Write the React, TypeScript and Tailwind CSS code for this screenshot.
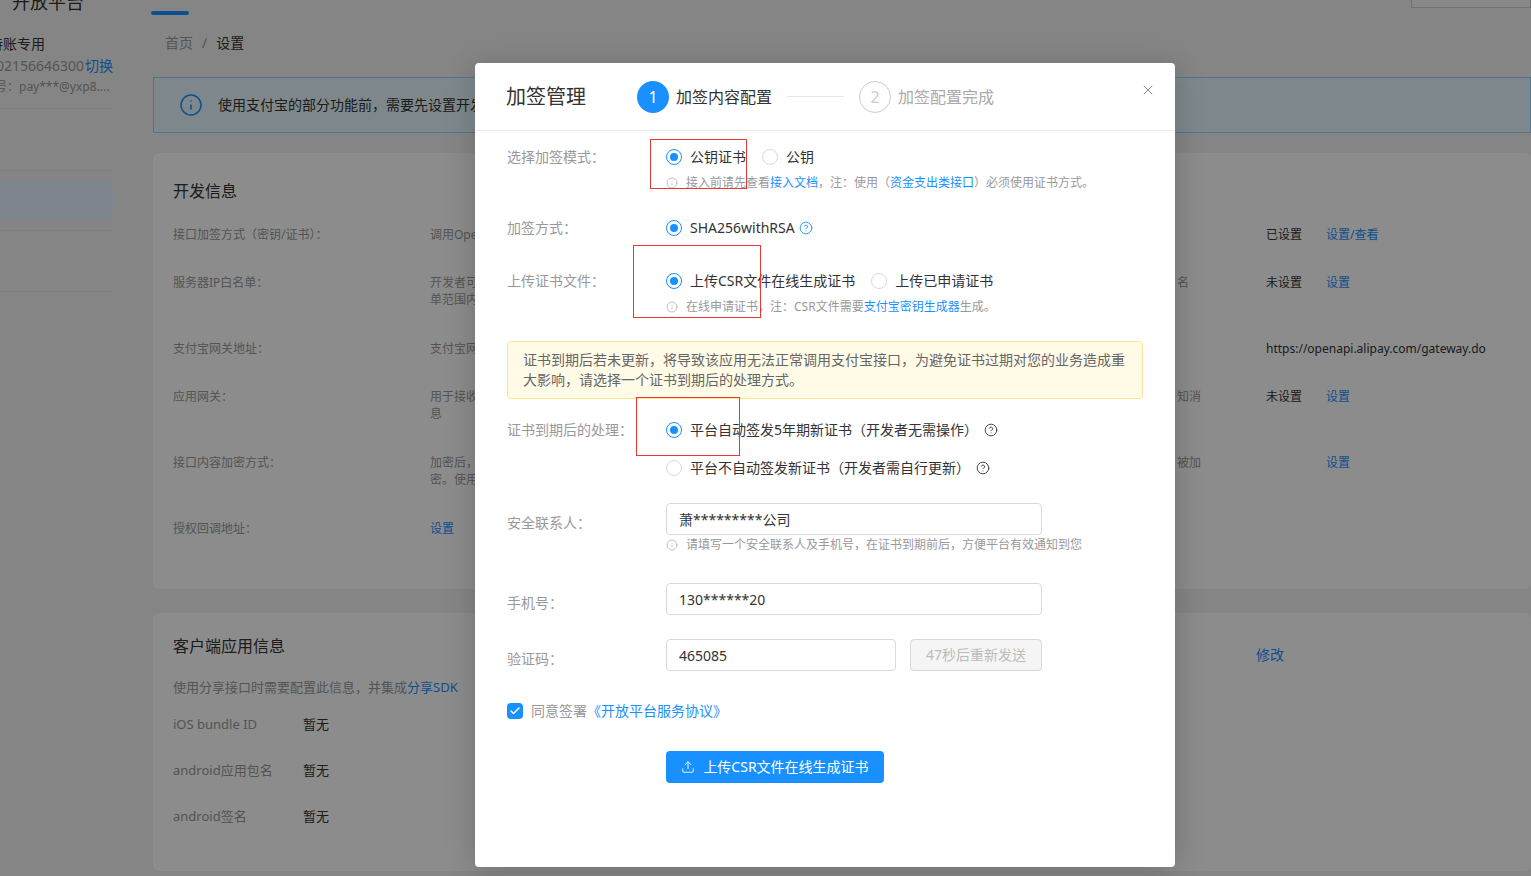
import { Check, CircleHelp, Info, Upload, X } from "lucide-react"
import type { ReactNode } from "react"

const devRows = [
  { label: "接口加签方式（密钥/证书）：", desc: ["调用OpenAPI时需要使用的加签方式"], tail: "", status: "已设置", link: "设置/查看", h: "h-[48px]" },
  { label: "服务器IP白名单：", desc: ["开发者可设置调用接口的服务器IP", "单范围内的请求才会被受理"], tail: "名", status: "未设置", link: "设置", h: "h-[66px]" },
  { label: "支付宝网关地址：", desc: ["支付宝网关地址用于接口调用"], tail: "", status: "https://openapi.alipay.com/gateway.do", link: "", h: "h-[48px]" },
  { label: "应用网关：", desc: ["用于接收支付宝异步通知消", "息"], tail: "知消", status: "未设置", link: "设置", h: "h-[66px]" },
  { label: "接口内容加密方式：", desc: ["加密后，接口内容将被加", "密。使用前请先配置"], tail: "被加", status: "", link: "设置", h: "h-[66px]" },
  { label: "授权回调地址：", desc: [], tail: "", status: "", link: "", h: "h-[48px]" },
]

const clientRows = [
  { label: "iOS bundle ID", value: "暂无" },
  { label: "android应用包名", value: "暂无" },
  { label: "android签名", value: "暂无" },
]

function Radio({ checked, children }: { checked?: boolean; children: ReactNode }) {
  return (
    <div className="flex items-center h-[22px] text-sm text-[#333] whitespace-nowrap">
      <span className={`w-4 h-4 rounded-full border flex items-center justify-center bg-white ${checked ? "border-[#1890ff]" : "border-[#d9d9d9]"}`}>
        {checked && <span className="w-2 h-2 rounded-full bg-[#1890ff]" />}
      </span>
      <span className="ml-2">{children}</span>
    </div>
  )
}

function Hint({ children, className = "" }: { children: ReactNode; className?: string }) {
  return (
    <div className={`flex items-center h-[18px] pl-[159px] text-xs text-[#999] whitespace-nowrap ${className}`}>
      <Info size={12} strokeWidth={1.5} className="mr-2 text-[#aaa]" />
      <span>{children}</span>
    </div>
  )
}

function FormRow({ label, children, className = "", labelClass = "" }: { label: string; children: ReactNode; className?: string; labelClass?: string }) {
  return (
    <div className={`flex items-center ${className}`}>
      <div className={`w-[159px] shrink-0 text-sm text-[#999] ${labelClass}`}>{label}</div>
      {children}
    </div>
  )
}

function Field({ value, className = "w-[376px]" }: { value: string; className?: string }) {
  return (
    <input
      readOnly
      value={value}
      className={`h-8 px-3 border border-[#d9d9d9] rounded-sm text-sm text-[#333] outline-none ${className}`}
    />
  )
}

function A({ children }: { children: ReactNode }) {
  return <span className="text-[#1890ff]">{children}</span>
}

function Background() {
  return (
    <div className="h-screen overflow-hidden bg-[#f3f3f3] text-[#333]">
      <div className="h-[15px] flex items-start overflow-hidden">
        <div className="w-[151px] pl-3 -mt-[7px] text-lg leading-none text-[#333]">开放平台</div>
        <div className="w-[38px] h-[4px] mt-[11px] rounded-sm bg-[#1890ff]" />
        <div className="ml-auto w-[120px] h-[9px] -mt-px border border-[#ccc] bg-[#f8f8f8]" />
      </div>

      <div className="flex">
        <div className="w-[113px] shrink-0 overflow-hidden">
          <div className="h-[94px] pt-[19px] border-b border-[#e8e8e8] whitespace-nowrap">
            <div className="-ml-[11px] text-sm leading-5 text-[#333]">待账专用</div>
            <div className="flex justify-between mt-[2px] text-sm leading-5 text-[#999]">
              <span className="-ml-[4px]">02156646300</span>
              <A>切换</A>
            </div>
            <div className="-ml-[5px] mt-[1px] text-xs leading-5 text-[#999]">号：pay***@yxp8....</div>
          </div>
          <div className="h-[62px] border-b border-[#e8e8e8]" />
          <div className="h-[60px] border-b border-[#e8e8e8] pt-[9px]">
            <div className="h-10 rounded-sm bg-[#e6f2ff]" />
          </div>
          <div className="h-[61px] border-b border-[#e8e8e8]" />
        </div>

        <div className="flex-1 min-w-0 pl-10">
          <div className="h-[62px] flex items-center pl-3 pb-[6px] text-sm">
            <span className="text-[#999]">首页</span>
            <span className="mx-[9px] text-[#999]">/</span>
            <span className="text-[#333]">设置</span>
          </div>

          <div className="h-[56px] flex items-center pl-[25px] border border-[#91d5ff] bg-[#e6f7ff] text-sm whitespace-nowrap">
            <Info size={24} strokeWidth={1.5} className="text-[#1890ff] mr-[15px]" />
            使用支付宝的部分功能前，需要先设置开发信息
          </div>

          <div className="mt-5 h-[436px] bg-white rounded-md pl-5 pt-[27px]">
            <div className="text-base leading-[22px] text-[#333] mb-[24px]">开发信息</div>
            {devRows.map((row) => (
              <div key={row.label} className={`flex text-xs leading-[17px] whitespace-nowrap ${row.h}`}>
                <div className="w-[257px] shrink-0 text-[#999]">{row.label}</div>
                <div className="w-[745px] shrink-0 text-[#999]">
                  {row.desc.map((line) => (
                    <div key={line}>{line}</div>
                  ))}
                  {row.label === "授权回调地址：" && <A>设置</A>}
                </div>
                <div className="w-[91px] shrink-0 pl-[2px] text-[#999]">{row.tail}</div>
                <div className={row.status.length > 10 ? "" : "w-[60px] shrink-0 text-[#333]"}>{row.status}</div>
                <A>{row.link}</A>
              </div>
            ))}
          </div>

          <div className="mt-6 h-[258px] bg-white rounded-md pl-5 pt-[22px] relative">
            <div className="text-base leading-[22px] text-[#333]">客户端应用信息</div>
            <div className="mt-[20px] text-[13px] leading-5 text-[#999]">
              使用分享接口时需要配置此信息，并集成<A>分享SDK</A>
            </div>
            <div className="mt-[17px] flex flex-col gap-[26px]">
              {clientRows.map((row) => (
                <div key={row.label} className="flex text-[13px] leading-5">
                  <div className="w-[130px] text-[#999]">{row.label}</div>
                  <div className="text-[#333]">{row.value}</div>
                </div>
              ))}
            </div>
            <div className="absolute left-[1103px] top-[32px] text-sm">
              <A>修改</A>
            </div>
          </div>
        </div>
      </div>
    </div>
  )
}

export default function App() {
  return (
    <div className="relative h-screen overflow-hidden [font-family:'Noto_Sans','Noto_Sans_CJK_SC',sans-serif]">
      <Background />
      <div className="absolute inset-0 bg-black/45" />

      {/* Dialog */}
      <div className="absolute left-[475px] top-[63px] w-[700px] h-[804px] bg-white rounded-sm shadow-[0_4px_30px_rgba(0,0,0,0.2)]">
        <div className="h-[68px] flex items-center pl-[31px] border-b border-[#eee] whitespace-nowrap relative">
          <div className="w-[131px] text-xl text-[#333]">加签管理</div>
          <div className="w-8 h-8 rounded-full bg-[#1890ff] text-white text-base flex items-center justify-center">1</div>
          <div className="ml-[7px] text-base text-[#333]">加签内容配置</div>
          <div className="w-[57px] h-px mx-[15px] bg-[#e8e8e8]" />
          <div className="w-8 h-8 rounded-full border border-[#ccc] text-[#ccc] text-base flex items-center justify-center">2</div>
          <div className="ml-[7px] text-base text-[#aaa]">加签配置完成</div>
          <X size={16} strokeWidth={1.25} className="absolute right-[19px] top-[19px] text-[#777]" />
        </div>

        <div className="pl-[32px] pr-[32px] flex flex-col">
          <FormRow label="选择加签模式：" className="mt-[15px]">
            <div className="flex gap-4">
              <Radio checked>公钥证书</Radio>
              <Radio>公钥</Radio>
            </div>
          </FormRow>
          <Hint className="mt-[6px]">
            接入前请先查看<A>接入文档</A>，注：使用（<A>资金支出类接口</A>）必须使用证书方式。
          </Hint>

          <FormRow label="加签方式：" className="mt-[25px]">
            <Radio checked>
              <span className="inline-flex items-center gap-1">
                SHA256withRSA
                <CircleHelp size={14} strokeWidth={1.5} className="text-[#1890ff]" />
              </span>
            </Radio>
          </FormRow>

          <FormRow label="上传证书文件：" className="mt-[31px]">
            <div className="flex gap-4">
              <Radio checked>上传CSR文件在线生成证书</Radio>
              <Radio>上传已申请证书</Radio>
            </div>
          </FormRow>
          <Hint className="mt-[6px]">
            在线申请证书，注：CSR文件需要<A>支付宝密钥生成器</A>生成。
          </Hint>

          <div className="mt-[25px] h-[58px] px-[15px] pt-[8px] border border-[#ffe58f] rounded-sm bg-[#fffbe6] text-sm leading-[20px] text-[#666]">
            证书到期后若未更新，将导致该应用无法正常调用支付宝接口，为避免证书过期对您的业务造成重大影响，请选择一个证书到期后的处理方式。
          </div>

          <FormRow label="证书到期后的处理：" className="mt-[20px]">
            <Radio checked>
              <span className="inline-flex items-center gap-[6px]">
                平台自动签发5年期新证书（开发者无需操作）
                <CircleHelp size={14} strokeWidth={1.5} className="text-[#333]" />
              </span>
            </Radio>
          </FormRow>
          <div className="mt-[16px] pl-[159px]">
            <Radio>
              <span className="inline-flex items-center gap-[6px]">
                平台不自动签发新证书（开发者需自行更新）
                <CircleHelp size={14} strokeWidth={1.5} className="text-[#333]" />
              </span>
            </Radio>
          </div>

          <FormRow label="安全联系人：" className="mt-[24px]" labelClass="pt-2">
            <Field value="萧*********公司" />
          </FormRow>
          <Hint className="mt-px">请填写一个安全联系人及手机号，在证书到期前后，方便平台有效通知到您</Hint>

          <FormRow label="手机号：" className="mt-[29px]" labelClass="pt-2">
            <Field value="130******20" />
          </FormRow>

          <FormRow label="验证码：" className="mt-[24px]" labelClass="pt-2">
            <Field value="465085" className="w-[230px]" />
            <div className="ml-[14px] w-[132px] h-8 flex items-center justify-center border border-[#d9d9d9] rounded-sm bg-[#f5f5f5] text-sm text-[#bbb]">
              47秒后重新发送
            </div>
          </FormRow>

          <div className="mt-[29px] h-[22px] flex items-center text-sm text-[#999]">
            <span className="w-4 h-4 mr-2 rounded-sm bg-[#1890ff] flex items-center justify-center">
              <Check size={12} strokeWidth={3} className="text-white" />
            </span>
            同意签署<A>《开放平台服务协议》</A>
          </div>

          <div className="mt-[29px] pl-[159px]">
            <button className="w-[218px] h-8 flex items-center justify-center gap-2 rounded-sm bg-[#1890ff] text-white text-sm">
              <Upload size={14} strokeWidth={1.5} />
              上传CSR文件在线生成证书
            </button>
          </div>
        </div>

        {/* red annotation boxes from the original screenshot */}
        <div className="absolute left-[175px] top-[76px] w-[97px] h-[50px] border border-[#e53935]" />
        <div className="absolute left-[158px] top-[182px] w-[128px] h-[73px] border border-[#e53935]" />
        <div className="absolute left-[161px] top-[334px] w-[104px] h-[59px] border border-[#e53935]" />
      </div>
    </div>
  )
}
